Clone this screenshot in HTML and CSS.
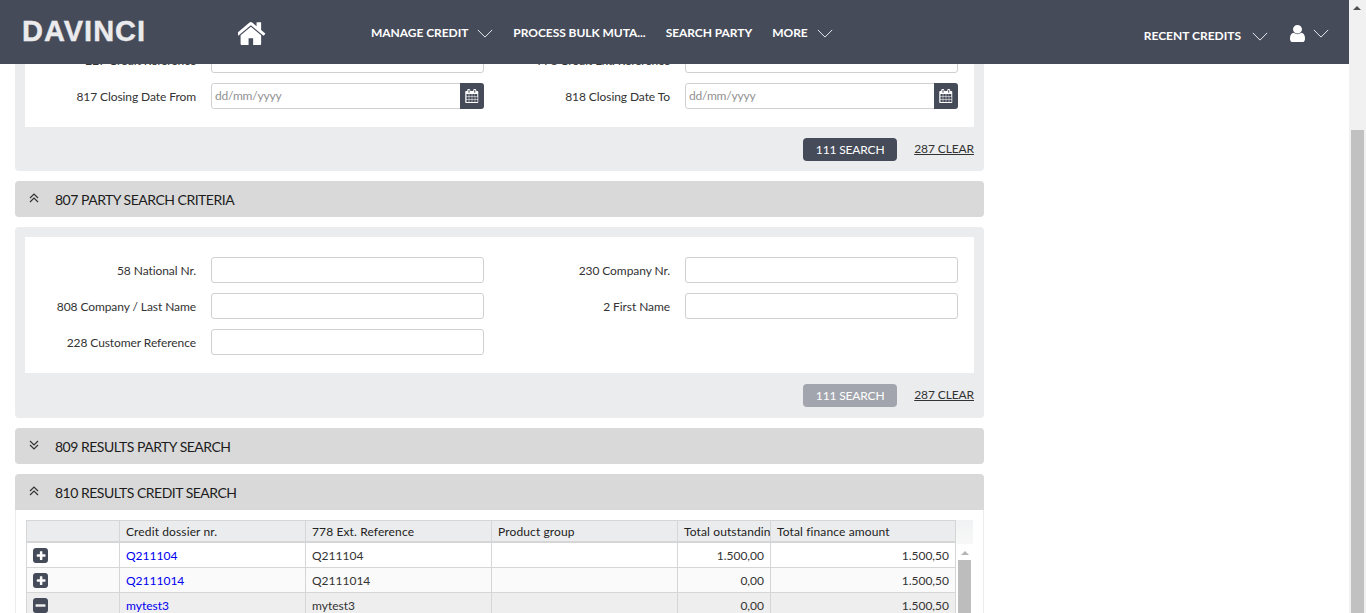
FILE: index.html
```html
<!DOCTYPE html>
<html lang="en">
<head>
    <meta charset="UTF-8">
    <title>Davinci - Search</title>
    <link rel="stylesheet" href="styles.css">
</head>
<body>
    <svg class="icon-defs" width="0" height="0">
        <symbol id="i-home" viewBox="128 190 1536 1346"><path d="M1408 992v480q0 26-19 45t-45 19h-384v-384h-256v384h-384q-26 0-45-19t-19-45v-480q0-1 .5-3t.5-3l575-474 575 474q1 2 1 6zm223-69l-62 74q-8 9-21 11h-3q-13 0-21-7l-692-577-692 577q-12 8-24 7-13-2-21-11l-62-74q-8-10-7-23.5t11-21.5l719-599q32-26 76-26t76 26l244 204v-195q0-14 9-23t23-9h192q14 0 23 9t9 23v408l219 182q10 8 11 21.5t-7 23.5z"/></symbol>
        <symbol id="i-user" viewBox="256 128 1280 1536" preserveAspectRatio="none"><path d="M1536 1399q0 109-62.5 187t-150.5 78h-854q-88 0-150.5-78t-62.5-187q0-85 8.5-160.5t31.5-152 58.5-131 94-89 134.5-34.5q131 128 313 128t313-128q76 0 134.5 34.5t94 89 58.5 131 31.5 152 8.5 160.5zm-256-887q0 159-112.5 271.5t-271.5 112.5-271.5-112.5-112.5-271.5 112.5-271.5 271.5-112.5 271.5 112.5 112.5 271.5z"/></symbol>
        <symbol id="i-cal" viewBox="0 0 1792 1792"><path d="M192 1664h288v-288h-288v288zm352 0h320v-288h-320v288zm-352-352h288v-320h-288v320zm352 0h320v-320h-320v320zm-352-384h288v-288h-288v288zm736 736h320v-288h-320v288zm-384-736h320v-288h-320v288zm768 736h288v-288h-288v288zm-384-352h320v-320h-320v320zm-352-864v-288q0-13-9.5-22.5t-22.5-9.5h-64q-13 0-22.5 9.5t-9.5 22.5v288q0 13 9.5 22.5t22.5 9.5h64q13 0 22.5-9.5t9.5-22.5zm736 864h288v-320h-288v320zm-384-384h320v-288h-320v288zm352 0h288v-288h-288v288zm32-480v-288q0-13-9.5-22.5t-22.5-9.5h-64q-13 0-22.5 9.5t-9.5 22.5v288q0 13 9.5 22.5t22.5 9.5h64q13 0 22.5-9.5t9.5-22.5zm384-64v1280q0 52-38 90t-90 38h-1408q-52 0-90-38t-38-90v-1280q0-52 38-90t90-38h128v-96q0-66 47-113t113-47h64q66 0 113 47t47 113v96h384v-96q0-66 47-113t113-47h64q66 0 113 47t47 113v96h128q52 0 90 38t38 90z"/></symbol>
        <symbol id="i-plus" viewBox="0 0 1536 1536"><path transform="translate(0 -128)" d="M1280 960v-128q0-26-19-45t-45-19h-256v-256q0-26-19-45t-45-19h-128q-26 0-45 19t-19 45v256h-256q-26 0-45 19t-19 45v128q0 26 19 45t45 19h256v256q0 26 19 45t45 19h128q26 0 45-19t19-45v-256h256q26 0 45-19t19-45zm256-544v960q0 119-84.5 203.5t-203.5 84.5h-960q-119 0-203.5-84.5t-84.5-203.5v-960q0-119 84.5-203.5t203.5-84.5h960q119 0 203.5 84.5t84.5 203.5z"/></symbol>
        <symbol id="i-minus" viewBox="0 0 1536 1536"><path transform="translate(0 -128)" d="M1280 960v-128q0-26-19-45t-45-19h-896q-26 0-45 19t-19 45v128q0 26 19 45t45 19h896q26 0 45-19t19-45zm256-544v960q0 119-84.5 203.5t-203.5 84.5h-960q-119 0-203.5-84.5t-84.5-203.5v-960q0-119 84.5-203.5t203.5-84.5h960q119 0 203.5 84.5t84.5 203.5z"/></symbol>
        <symbol id="i-down" viewBox="0 0 20 11"><path d="M1 1l9 9 9-9" fill="none" stroke="currentColor" stroke-width="1.1"/></symbol>
        <symbol id="i-up2" viewBox="0 0 10 10"><path d="M1 5l4-4 4 4M1 9l4-4 4 4" fill="none" stroke="currentColor" stroke-width="1.2"/></symbol>
        <symbol id="i-down2" viewBox="0 0 10 10"><path d="M1 1l4 4 4-4M1 5l4 4 4-4" fill="none" stroke="currentColor" stroke-width="1.2"/></symbol>
    </svg>

    <header class="topbar">
        <div class="logo">DAVINCI</div>
        <svg class="home-icon"><use href="#i-home"/></svg>
        <nav class="nav">
            <a class="nav-item">MANAGE CREDIT <svg class="chev"><use href="#i-down"/></svg></a>
            <a class="nav-item">PROCESS BULK MUTA...</a>
            <a class="nav-item">SEARCH PARTY</a>
            <a class="nav-item">MORE <svg class="chev"><use href="#i-down"/></svg></a>
        </nav>
        <div class="top-right">
            <a class="nav-item recent">RECENT CREDITS <svg class="chev"><use href="#i-down"/></svg></a>
            <a class="user-item"><svg class="user-icon"><use href="#i-user"/></svg><svg class="chev user-chev"><use href="#i-down"/></svg></a>
        </div>
    </header>

    <div class="page">
        <main class="content">
            <section class="panel panel-first">
                <div class="form-box">
                    <div class="form-grid">
                        <label>227 Credit Reference</label>
                        <input class="field" type="text">
                        <label>778 Credit Ext. Reference</label>
                        <input class="field" type="text">
                        <label>817 Closing Date From</label>
                        <div class="date-field"><input type="text" placeholder="dd/mm/yyyy"><span class="date-btn"><svg><use href="#i-cal"/></svg></span></div>
                        <label>818 Closing Date To</label>
                        <div class="date-field"><input type="text" placeholder="dd/mm/yyyy"><span class="date-btn"><svg><use href="#i-cal"/></svg></span></div>
                    </div>
                </div>
                <div class="actions">
                    <button class="btn">111 SEARCH</button>
                    <a class="clear-link">287 CLEAR</a>
                </div>
            </section>

            <div class="bar"><svg class="toggle"><use href="#i-up2"/></svg>807 PARTY SEARCH CRITERIA</div>

            <section class="panel panel-party">
                <div class="form-box">
                    <div class="form-grid">
                        <label>58 National Nr.</label>
                        <input class="field" type="text">
                        <label>230 Company Nr.</label>
                        <input class="field" type="text">
                        <label>808 Company / Last Name</label>
                        <input class="field" type="text">
                        <label>2 First Name</label>
                        <input class="field" type="text">
                        <label>228 Customer Reference</label>
                        <input class="field" type="text">
                    </div>
                </div>
                <div class="actions">
                    <button class="btn btn-disabled">111 SEARCH</button>
                    <a class="clear-link">287 CLEAR</a>
                </div>
            </section>

            <div class="bar"><svg class="toggle"><use href="#i-down2"/></svg>809 RESULTS PARTY SEARCH</div>

            <div class="bar bar-open"><svg class="toggle"><use href="#i-up2"/></svg>810 RESULTS CREDIT SEARCH</div>
            <section class="results">
                <div class="grid-wrap">
                    <table class="grid">
                        <thead>
                            <tr>
                                <th class="c-exp"></th>
                                <th class="c-wide">Credit dossier nr.</th>
                                <th class="c-wide">778 Ext. Reference</th>
                                <th class="c-wide">Product group</th>
                                <th class="c-num">Total outstanding</th>
                                <th>Total finance amount</th>
                            </tr>
                        </thead>
                        <tbody>
                            <tr>
                                <td><svg class="exp"><use href="#i-plus"/></svg></td>
                                <td><a class="dossier">Q211104</a></td>
                                <td>Q211104</td>
                                <td></td>
                                <td class="num">1.500,00</td>
                                <td class="num">1.500,50</td>
                            </tr>
                            <tr class="row-alt">
                                <td><svg class="exp"><use href="#i-plus"/></svg></td>
                                <td><a class="dossier">Q2111014</a></td>
                                <td>Q2111014</td>
                                <td></td>
                                <td class="num">0,00</td>
                                <td class="num">1.500,50</td>
                            </tr>
                            <tr class="row-open">
                                <td><svg class="exp"><use href="#i-minus"/></svg></td>
                                <td><a class="dossier">mytest3</a></td>
                                <td>mytest3</td>
                                <td></td>
                                <td class="num">0,00</td>
                                <td class="num">1.500,50</td>
                            </tr>
                        </tbody>
                    </table>
                    <div class="grid-scroll">
                        <div class="grid-scroll-head"></div>
                        <div class="grid-scroll-up"></div>
                        <div class="grid-scroll-thumb"></div>
                    </div>
                </div>
            </section>
        </main>
        <aside class="page-scroll">
            <div class="page-scroll-up"></div>
            <div class="page-scroll-thumb"></div>
        </aside>
    </div>
</body>
</html>
```

FILE: styles.css
```css
html, body {
    height: 100%;
    margin: 0;
    overflow: hidden;
}

body {
    font-family: Lato, "Open Sans", sans-serif;
    font-size: 12px;
    color: #333;
    background-color: #fff;
}

.icon-defs {
    display: block;
    height: 0;
}

/* top bar */
.topbar {
    position: fixed;
    top: 0;
    left: 0;
    right: 17px;
    z-index: 10;
    height: 64px;
    display: flex;
    align-items: center;
    background-color: #464b5a;
    color: #fff;
}

.logo {
    width: 238px;
    padding-left: 22px;
    box-sizing: border-box;
    font-family: "Liberation Sans", sans-serif;
    font-size: 29px;
    font-weight: 700;
    letter-spacing: 1px;
    -webkit-text-stroke: 0.4px #ebebed;
    color: #ebebed;
    margin-top: -1px;
}

.home-icon {
    width: 28px;
    height: 24px;
    fill: #fff;
    margin-top: 2px;
}

.nav {
    display: flex;
    align-items: center;
    gap: 20px;
    margin-left: 105px;
}

.nav-item {
    display: flex;
    align-items: center;
    font-size: 12px;
    font-weight: 700;
    letter-spacing: -0.05px;
    white-space: nowrap;
    color: #fff;
}

.chev {
    width: 16px;
    height: 9px;
    margin-left: 9px;
    color: #fff;
    margin-top: 2px;
}

.top-right {
    display: flex;
    align-items: center;
    margin-left: auto;
    padding-right: 20px;
    padding-top: 7px;
}

.recent {
    letter-spacing: 0;
}

.recent .chev {
    margin-left: 11px;
}

.user-item {
    display: flex;
    align-items: center;
    margin-left: 22px;
    margin-top: -5px;
}

.user-icon {
    width: 15px;
    height: 17px;
    fill: #fff;
}

.user-chev {
    margin-left: 8px;
    margin-top: 0;
}

/* page */
.page {
    display: flex;
    height: 613px;
}

.content {
    flex: 1;
    min-width: 0;
    padding: 0 365px 0 15px;
    overflow: hidden;
}

.panel {
    background-color: #ebecee;
    border-radius: 4px;
    padding: 10px 10px 0;
    margin-bottom: 10px;
}

.panel-first {
    padding-top: 0;
}

.panel-first .form-box {
    padding-top: 47px;
}

.panel-party {
    padding-bottom: 1px;
}

.form-box {
    background-color: #fff;
    padding: 20px 16px 18px 0;
}

.form-grid {
    display: grid;
    grid-template-columns: 186px 273px 201px 273px;
    row-gap: 10px;
    align-items: center;
}

.form-grid label {
    padding-right: 15px;
    text-align: right;
    white-space: nowrap;
    letter-spacing: -0.08px;
}

.field,
.date-field {
    height: 26px;
    box-sizing: border-box;
    width: 273px;
    border: 1px solid #d0d0d0;
    border-radius: 3px;
    background-color: #fff;
}

.date-field {
    display: flex;
}

.date-field input {
    flex: 1;
    min-width: 0;
    border: none;
    border-radius: 3px 0 0 3px;
    outline: none;
    padding: 0 3px 2px;
    font-family: inherit;
    font-size: 12px;
    letter-spacing: -0.2px;
    color: #333;
}

.date-field input::placeholder {
    color: #919191;
}

.date-btn {
    width: 24px;
    margin: -1px -1px -1px 0;
    border-radius: 0 3px 3px 0;
    background-color: #464b5a;
    display: flex;
    align-items: center;
    justify-content: center;
}

.date-btn svg {
    width: 14px;
    height: 14px;
    fill: #fff;
}

.actions {
    display: flex;
    justify-content: flex-end;
    align-items: center;
    gap: 17px;
    padding: 11px 0 10px;
}

.btn {
    width: 94px;
    height: 23px;
    border: none;
    border-radius: 4px;
    background-color: #464b5a;
    color: #fff;
    font-family: inherit;
    font-size: 12px;
    letter-spacing: -0.15px;
    padding: 0;
}

.btn-disabled {
    background-color: #a2a5ad;
}

.clear-link {
    color: #333;
    text-decoration: underline;
    font-size: 12px;
    letter-spacing: -0.1px;
    margin-top: -2px;
}

/* collapsible bars */
.bar {
    height: 36px;
    display: flex;
    align-items: center;
    background-color: #d9d9d9;
    border-radius: 4px;
    margin-bottom: 10px;
    font-size: 14px;
    letter-spacing: -0.5px;
    color: #1c1c1c;
}

.bar-open {
    margin-bottom: 0;
    border-radius: 4px 4px 0 0;
}

.toggle {
    width: 10px;
    height: 10px;
    margin: -3px 16px 0 14px;
    color: #333;
}

/* results grid */
.results {
    border: 1px solid #ebecee;
    border-top: none;
    padding: 10px 10px 0;
}

.grid-wrap {
    display: flex;
    align-items: flex-start;
}

.grid {
    width: 930px;
    table-layout: fixed;
    border-collapse: collapse;
}

.grid th {
    height: 20px;
    padding: 0 6px;
    background-color: #ebecee;
    border: 1px solid #d6d6d6;
    border-bottom-width: 2px;
    font-weight: 400;
    font-size: 12px;
    letter-spacing: 0.12px;
    text-align: left;
    color: #222;
    white-space: nowrap;
    overflow: hidden;
}

.grid td {
    height: 24px;
    padding: 0 6px;
    border: 1px solid #d6d6d6;
    white-space: nowrap;
    overflow: hidden;
}

.c-exp {
    width: 80px;
}

.c-wide {
    width: 173px;
}

.c-num {
    width: 80px;
}

.grid .num {
    text-align: right;
}

.row-alt td {
    background-color: #fafafa;
}

.row-open td {
    background-color: #eee;
}

.dossier {
    color: #0000f0;
}

.exp {
    display: block;
    width: 15px;
    height: 15px;
    fill: #464b5a;
}

.grid-scroll {
    width: 17px;
    flex: none;
}

.grid-scroll-head {
    height: 24px;
    background: linear-gradient(#f1f2f3, #f8f8f8);
}

.grid-scroll-up {
    width: 0;
    height: 0;
    margin: 7px 0 0 5px;
    border: 4px solid transparent;
    border-top: none;
    border-bottom: 4px solid #b5b5b5;
}

.grid-scroll-thumb {
    height: 80px;
    width: 13px;
    margin: 5px 0 0 2px;
    background-color: #bdbdbd;
}

/* browser style scrollbar of the page */
.page-scroll {
    position: relative;
    width: 17px;
    flex: none;
    background-color: #f1f1f1;
}

.page-scroll-up {
    width: 0;
    height: 0;
    margin: 6px 0 0 4px;
    border: 4px solid transparent;
    border-top: none;
    border-bottom: 4px solid #505050;
}

.page-scroll-thumb {
    position: absolute;
    top: 130px;
    bottom: 0;
    left: 2px;
    right: 2px;
    background-color: #c1c1c1;
}
```
